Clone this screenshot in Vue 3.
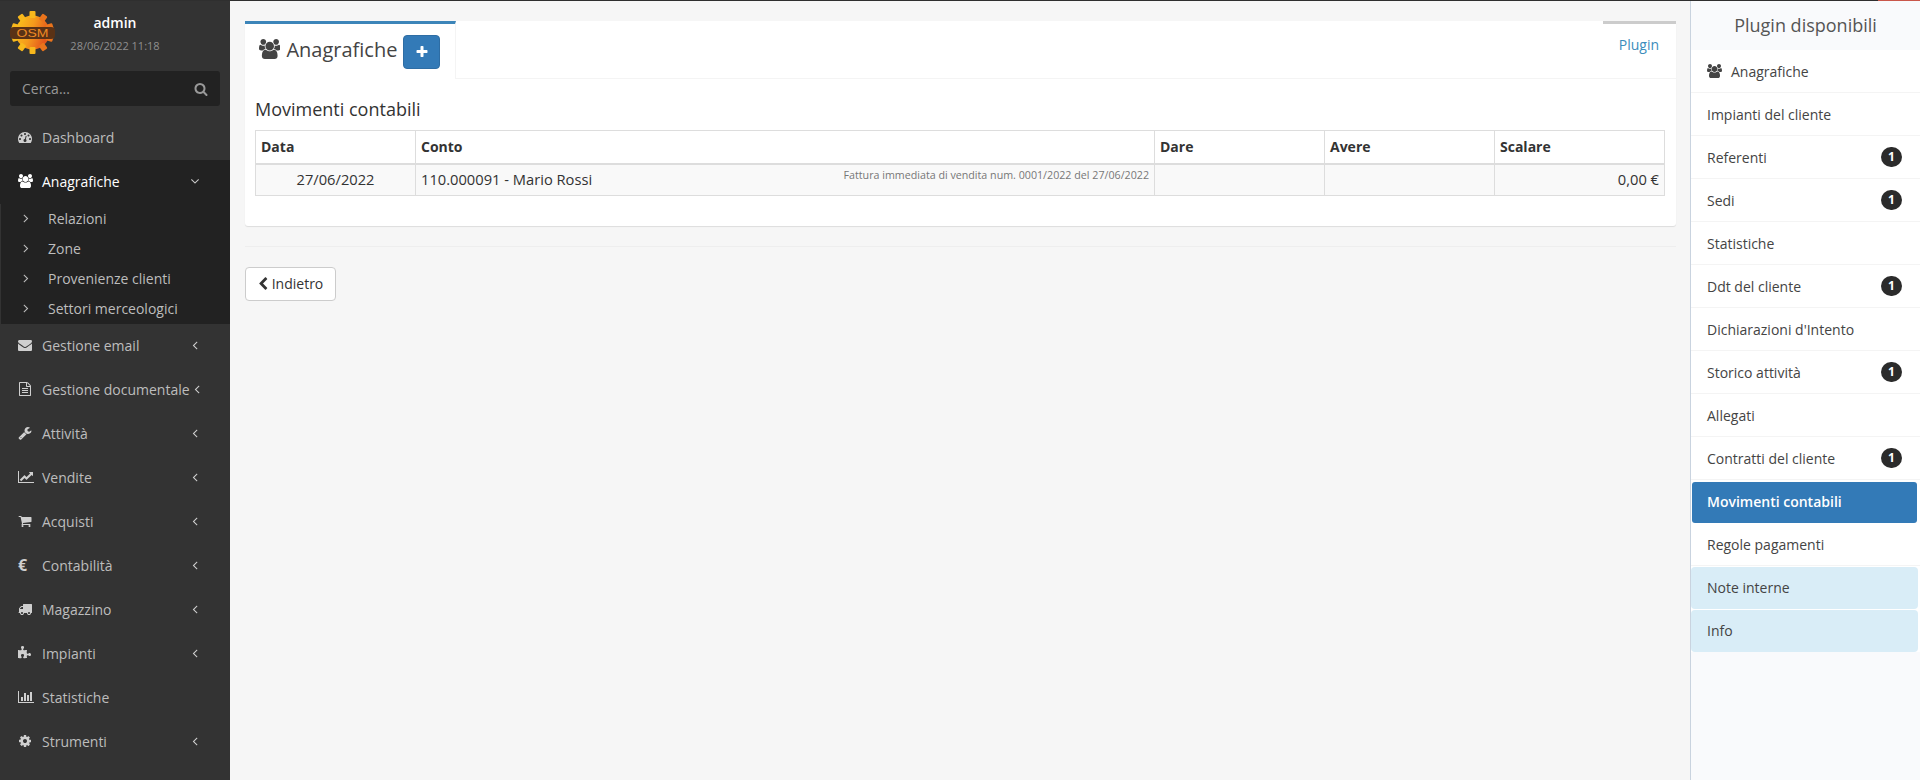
<script setup>
const P = {
  dashboard: 'M384 1152q0-53-37.500-90.500t-90.500-37.500-90.500 37.500-37.500 90.500 37.500 90.500 90.500 37.500 90.500-37.500 37.500-90.500zm192-448q0-53-37.500-90.500t-90.500-37.500-90.500 37.500-37.500 90.500 37.500 90.500 90.500 37.500 90.500-37.500 37.500-90.500zm428 481l101-382q6-26-7.500-48.500t-38.500-29.500-48 6.500-30 39.500l-101 382q-60 5-107 43.500t-63 98.500q-20 77 20 146t117 89 146-20 89-117q16-60-6-117t-72-91zm660-33q0-53-37.500-90.500t-90.500-37.500-90.500 37.500-37.500 90.500 37.500 90.500 90.500 37.500 90.500-37.500 37.500-90.500zm-640-640q0-53-37.500-90.500t-90.500-37.500-90.500 37.500-37.500 90.500 37.500 90.500 90.500 37.500 90.500-37.500 37.500-90.500zm448 192q0-53-37.500-90.500t-90.500-37.500-90.500 37.500-37.500 90.500 37.500 90.500 90.500 37.500 90.500-37.500 37.500-90.500zm320 448q0 261-141 483-19 29-54 29h-1402q-35 0-54-29-141-221-141-483 0-182 71-348t191-286 286-191 348-71 348 71 286 191 191 286 71 348z',
  users: 'M593 896q-162 5-265 128h-134q-82 0-138-40.500t-56-118.500q0-353 124-353 6 0 43.500 21t97.500 42.500 119 21.500q67 0 133-23-5 37-5 66 0 139 81 256zm1071 637q0 120-73 189.500t-194 69.500h-874q-121 0-194-69.500t-73-189.500q0-53 3.500-103.500t14-109 26.500-108.500 43-97.500 62-81 85.500-53.500 111.500-20q10 0 43 21.500t73 48 107 48 135 21.500 135-21.500 107-48 73-48 43-21.500q61 0 111.500 20t85.500 53.500 62 81 43 97.500 26.500 108.500 14 109 3.500 103.500zm-1024-1277q0 106-75 181t-181 75-181-75-75-181 75-181 181-75 181 75 75 181zm704 384q0 159-112.500 271.500t-271.500 112.500-271.500-112.500-112.500-271.500 112.500-271.500 271.500-112.500 271.500 112.500 112.500 271.500zm576 225q0 78-56 118.500t-138 40.500h-134q-103-123-265-128 81-117 81-256 0-29-5-66 66 23 133 23 59 0 119-21.500t97.500-42.500 43.500-21q124 0 124 353zm-128-609q0 106-75 181t-181 75-181-75-75-181 75-181 181-75 181 75 75 181z',
  envelope: 'M1792 710v794q0 66-47 113t-113 47h-1472q-66 0-113-47t-47-113v-794q44 49 101 87 362 246 497 345 57 42 92.500 65.500t94.500 48 110 24.500h2q51 0 110-24.500t94.500-48 92.500-65.500q170-123 498-345 57-39 100-87zm0-294q0 79-49 151t-122 123q-376 261-468 325-10 7-42.500 30.500t-54 38-52 32.500-57.500 27-50 9h-2q-23 0-50-9t-57.500-27-52-32.500-54-38-42.500-30.500q-91-64-262-182.500t-205-142.500q-62-42-117-115.500t-55-136.500q0-78 41.500-130t118.500-52h1472q65 0 112.500 47t47.500 113z',
  file: 'M1596 380q28 28 48 76t20 88v1152q0 40-28 68t-68 28h-1344q-40 0-68-28t-28-68v-1600q0-40 28-68t68-28h896q40 0 88 20t76 48zm-444-244v376h376q-10-29-22-41l-313-313q-12-12-41-22zm384 1528v-1024h-416q-40 0-68-28t-28-68v-416h-768v1536h1280zm-1024-864q0-14 9-23t23-9h704q14 0 23 9t9 23v64q0 14-9 23t-23 9h-704q-14 0-23-9t-9-23v-64zm736 224q14 0 23 9t9 23v64q0 14-9 23t-23 9h-704q-14 0-23-9t-9-23v-64q0-14 9-23t23-9h704zm0 256q14 0 23 9t9 23v64q0 14-9 23t-23 9h-704q-14 0-23-9t-9-23v-64q0-14 9-23t23-9h704z',
  wrench: 'M448 1472q0-26-19-45t-45-19-45 19-19 45 19 45 45 19 45-19 19-45zm644-420l-682 682q-37 37-90 37-52 0-91-37l-106-108q-38-36-38-90 0-53 38-91l681-681q39 98 114.500 173.500t173.500 114.500zm634-435q0 39-23 106-47 134-164.500 217.500t-258.500 83.500q-185 0-316.500-131.500t-131.500-316.500 131.500-316.500 316.500-131.500q58 0 121.500 16.500t107.500 46.500q16 11 16 28t-16 28l-293 169v224l193 107q5-3 79-48.500t135.500-81 70.500-35.500q15 0 23.500 10t8.500 25z',
  line: 'M2048 1536v128h-2048v-1536h128v1408h1920zm-128-1248v435q0 21-19.500 29.500t-35.500-7.500l-121-121-633 633q-10 10-23 10t-23-10l-233-233-416 416-192-192 585-585q10-10 23-10t23 10l233 233 464-464-121-121q-16-16-7.500-35.500t29.500-19.500h435q14 0 23 9t9 23z',
  cart: 'M704 1536q0 52-38 90t-90 38-90-38-38-90 38-90 90-38 90 38 38 90zm896 0q0 52-38 90t-90 38-90-38-38-90 38-90 90-38 90 38 38 90zm128-1088v512q0 24-16.500 42.500t-40.500 21.500l-1044 122q13 60 13 70 0 16-24 64h920q26 0 45 19t19 45-19 45-45 19h-1024q-26 0-45-19t-19-45q0-11 8-31.500t16-36 21.500-40 15.500-29.500l-177-823h-204q-26 0-45-19t-19-45 19-45 45-19h256q16 0 28.500 6.500t19.500 15.500 13 24.500 8 26 5.500 29.500 4.500 26h1201q26 0 45 19t19 45z',
  truck: 'M640 1408q0-52-38-90t-90-38-90 38-38 90 38 90 90 38 90-38 38-90zm-384-512h384v-256h-158q-13 0-22 9l-195 195q-9 9-9 22v30zm1280 512q0-52-38-90t-90-38-90 38-38 90 38 90 90 38 90-38 38-90zm256-1088v1024q0 15-4 26.500t-13.500 18.500-16.500 11.500-23.500 6-22.500 2-25.500 0-22.500-.5q0 106-75 181t-181 75-181-75-75-181h-384q0 106-75 181t-181 75-181-75-75-181h-64q-3 0-22.500.5t-25.500 0-22.500-2-23.500-6-16.500-11.500-13.500-18.500-4-26.500q0-26 19-45t45-19v-320q0-8-.5-35t0-38 2.500-34.500 6.500-37 14-30.500 22.500-30l198-198q19-19 50.500-32t58.500-13h160v-192q0-26 19-45t45-19h1024q26 0 45 19t19 45z',
  puzzle: 'M1664 1098q0 81-44.500 135t-123.500 54q-41 0-77.500-17.500t-59-38-56.500-38-71-17.500q-110 0-110 124 0 39 16 115t15 115v5q-22 0-33 1-34 3-97.500 11.500t-115.500 13.500-98 5q-61 0-103-26.500t-42-83.500q0-37 17.500-71t38-56.500 38-59 17.500-77.500q0-79-54-123.500t-135-44.500q-84 0-143 45.500t-59 127.500q0 43 15 83t33.500 64.500 33.500 53 15 50.500q0 45-46 89-37 35-117 35-95 0-245-24-9-2-27.500-4t-27.500-4l-13-2q-1 0-3-1-2 0-2-1v-1024q2 1 17.500 3.500t34 5 21.500 3.500q150 24 245 24 80 0 117-35 46-44 46-89 0-22-15-50.500t-33.500-53-33.500-64.500-15-83q0-82 59-127.500t144-45.500q80 0 134 44.500t54 123.500q0 41-17.500 77.500t-38 59-38 56.500-17.500 71q0 57 42 83.500t103 26.500q64 0 180-15t163-17v2q-1 2-3.500 17.500t-5 34-3.500 21.500q-24 150-24 245 0 80 35 117 44 46 89 46 22 0 50.500-15t53-33.500 64.500-33.500 83-15q82 0 127.500 59t45.500 143z',
  bars: 'M640 896v512h-256v-512h256zm384-512v1024h-256v-1024h256zm1024 1152v128h-2048v-1536h128v1408h1920zm-640-896v768h-256v-768h256zm384-384v1152h-256v-1152h256z',
  cog: 'M1152 896q0-106-75-181t-181-75-181 75-75 181 75 181 181 75 181-75 75-181zm512-109v222q0 12-8 23t-20 13l-185 28q-19 54-39 91 35 50 107 138 10 12 10 25t-9 23q-27 37-99 108t-94 71q-12 0-26-9l-138-108q-44 23-91 38-16 136-29 186-7 28-36 28h-222q-14 0-24.500-8.500t-11.500-21.500l-28-184q-49-16-90-37l-141 107q-10 9-25 9-14 0-25-11-126-114-165-168-7-10-7-23 0-12 8-23 15-21 51-66.500t54-70.500q-27-50-41-99l-183-27q-13-2-21-12.500t-8-23.500v-222q0-12 8-23t19-13l186-28q14-46 39-92-40-57-107-138-10-12-10-24 0-10 9-23 26-36 98.500-107.500t94.500-71.500q13 0 26 10l138 107q44-23 91-38 16-136 29-186 7-28 36-28h222q14 0 24.500 8.500t11.500 21.500l28 184q49 16 90 37l142-107q9-9 24-9 13 0 25 10 129 119 165 170 7 8 7 22 0 12-8 23-15 21-51 66.500t-54 70.500q26 50 41 98l183 28q13 2 21 12.500t8 23.500z',
  search: 'M1216 832q0-185-131.500-316.500t-316.500-131.500-316.500 131.500-131.500 316.500 131.500 316.500 316.500 131.500 316.500-131.500 131.500-316.500zm512 832q0 52-38 90t-90 38q-54 0-90-38l-343-342q-179 124-399 124-143 0-273.500-55.500t-225-150-150-225-55.500-273.500 55.500-273.500 150-225 225-150 273.500-55.500 273.500 55.500 225 150 150 225 55.500 273.500q0 220-124 399l343 343q37 37 37 90z',
  plus: 'M1600 736v192q0 40-28 68t-68 28h-416v416q0 40-28 68t-68 28h-192q-40 0-68-28t-28-68v-416h-416q-40 0-68-28t-28-68v-192q0-40 28-68t68-28h416v-416q0-40 28-68t68-28h192q40 0 68 28t28 68v416h416q40 0 68 28t28 68z',
  chevronLeft: 'M1427 301l-531 531 531 531q19 19 19 45t-19 45l-166 166q-19 19-45 19t-45-19l-742-742q-19-19-19-45t19-45l742-742q19-19 45-19t45 19l166 166q19 19 19 45t-19 45z',
  angleLeft: 'M1203 544q0 13-10 23l-393 393 393 393q10 10 10 23t-10 23l-50 50q-10 10-23 10t-23-10l-466-466q-10-10-10-23t10-23l466-466q10-10 23-10t23 10l50 50q10 10 10 23z',
  angleDown: 'M1395 736q0 13-10 23l-466 466q-10 10-23 10t-23-10l-466-466q-10-10-10-23t10-23l50-50q10-10 23-10t23 10l393 393 393-393q10-10 23-10t23 10l50 50q10 10 10 23z',
  angleRight: 'M1171 960q0 13-10 23l-466 466q-10 10-23 10t-23-10l-50-50q-10-10-10-23t10-23l393-393-393-393q-10-10-10-23t10-23l50-50q10-10 23-10t23 10l466 466q10 10 10 23z'
}
const W = { users: 1920, line: 2048, bars: 2048 }
const iw = (k) => (W[k] || 1792)

const subItems = ['Relazioni', 'Zone', 'Provenienze clienti', 'Settori merceologici']
const lowerMenu = [
  { label: 'Gestione email', icon: 'envelope', more: true },
  { label: 'Gestione documentale', icon: 'file', more: true },
  { label: 'Attività', icon: 'wrench', more: true },
  { label: 'Vendite', icon: 'line', more: true },
  { label: 'Acquisti', icon: 'cart', more: true },
  { label: 'Contabilità', glyph: '€', more: true },
  { label: 'Magazzino', icon: 'truck', more: true },
  { label: 'Impianti', icon: 'puzzle', more: true },
  { label: 'Statistiche', icon: 'bars', more: false },
  { label: 'Strumenti', icon: 'cog', more: true }
]
const plugins = [
  { label: 'Impianti del cliente' },
  { label: 'Referenti', badge: 1 },
  { label: 'Sedi', badge: 1 },
  { label: 'Statistiche' },
  { label: 'Ddt del cliente', badge: 1 },
  { label: "Dichiarazioni d'Intento" },
  { label: 'Storico attività', badge: 1 },
  { label: 'Allegati' },
  { label: 'Contratti del cliente', badge: 1 },
  { label: 'Movimenti contabili', kind: 'active' },
  { label: 'Regole pagamenti' },
  { label: 'Note interne', kind: 'info' },
  { label: 'Info', kind: 'info' }
]
const teeth = [0, 36, 72, 108, 144, 180, 216, 252, 288, 324]
</script>

<template>
  <div class="page">
    <div class="topline"><div class="topline-red"></div></div>
    <div class="layout">
      <aside class="sidebar">
        <div class="user">
          <svg class="logo" viewBox="0 0 46 46" width="46" height="46">
            <defs>
              <linearGradient id="gearGrad" x1="0" y1="0" x2="1" y2="0.35">
                <stop offset="0" stop-color="#fbc81c" />
                <stop offset="0.55" stop-color="#f59a1c" />
                <stop offset="1" stop-color="#e4561c" />
              </linearGradient>
            </defs>
            <circle cx="22.500" cy="22.500" r="17" fill="url(#gearGrad)" />
            <rect v-for="t in teeth" :key="t" x="19.500" y="1" width="6" height="7" rx="1" :fill="t > 0 && t < 180 ? '#ea741c' : '#f8b81c'" :transform="`rotate(${t} 22.500 22.500)`" />
            <rect x="0" y="17" width="45" height="12" rx="4" fill="#5a3216" />
            <text x="22.500" y="26.800" text-anchor="middle" textLength="32" lengthAdjust="spacingAndGlyphs" class="logo-text">OSM</text>
          </svg>
          <div class="user-info">
            <div class="user-name">admin</div>
            <div class="user-date">28/06/2022 11:18</div>
          </div>
        </div>

        <div class="search">
          <span>Cerca...</span>
          <svg viewBox="0 0 1792 1792" width="14" height="14"><path :d="P.search" /></svg>
        </div>

        <nav class="menu">
          <div class="item">
            <span class="icon"><svg :viewBox="`0 0 ${iw('dashboard')} 1792`" height="14"><path :d="P.dashboard" /></svg></span>
            <span>Dashboard</span>
          </div>
          <div class="item item-open">
            <span class="icon"><svg :viewBox="`0 0 ${iw('users')} 1792`" height="14"><path :d="P.users" /></svg></span>
            <span>Anagrafiche</span>
            <svg class="arrow" viewBox="0 0 1792 1792" width="14" height="14"><path :d="P.angleDown" /></svg>
          </div>
          <div class="submenu">
            <div v-for="s in subItems" :key="s" class="subitem">
              <svg viewBox="0 0 1792 1792" width="14" height="14"><path :d="P.angleRight" /></svg>
              <span>{{ s }}</span>
            </div>
          </div>
          <div v-for="m in lowerMenu" :key="m.label" class="item">
            <span class="icon">
              <svg v-if="m.icon" :viewBox="`0 0 ${iw(m.icon)} 1792`" height="14"><path :d="P[m.icon]" /></svg>
              <b v-else class="glyph">{{ m.glyph }}</b>
            </span>
            <span class="label">{{ m.label }}</span>
            <svg v-if="m.more" class="arrow" viewBox="0 0 1792 1792" width="14" height="14"><path :d="P.angleLeft" /></svg>
          </div>
        </nav>
      </aside>

      <main class="main">
        <section class="card">
          <header class="tabs">
            <div class="tab-active">
              <svg viewBox="0 0 1920 1792" height="20" class="tab-icon"><path :d="P.users" /></svg>
              <span class="tab-title">Anagrafiche</span>
              <button class="add" type="button">
                <svg viewBox="0 0 1792 1792" width="14" height="14"><path :d="P.plus" /></svg>
              </button>
            </div>
            <a class="tab-plugin">Plugin</a>
          </header>
          <div class="card-body">
            <h4 class="section-title">Movimenti contabili</h4>
            <table class="ledger">
              <colgroup>
                <col class="c-date" /><col class="c-account" /><col class="c-num" /><col class="c-num" /><col class="c-num" />
              </colgroup>
              <thead>
                <tr><th>Data</th><th>Conto</th><th>Dare</th><th>Avere</th><th>Scalare</th></tr>
              </thead>
              <tbody>
                <tr>
                  <td class="center">27/06/2022</td>
                  <td>
                    <div class="account">
                      <span>110.000091 - Mario Rossi</span>
                      <small>Fattura immediata di vendita num. 0001/2022 del 27/06/2022</small>
                    </div>
                  </td>
                  <td></td>
                  <td></td>
                  <td class="right">0,00 €</td>
                </tr>
              </tbody>
            </table>
          </div>
        </section>
        <hr class="rule" />
        <button class="back" type="button">
          <svg viewBox="0 0 1792 1792" width="14" height="14"><path :d="P.chevronLeft" /></svg>
          <span>Indietro</span>
        </button>
      </main>

      <aside class="plugins">
        <div class="plugins-head">Plugin disponibili</div>
        <ul class="plugin-list">
          <li class="plugin">
            <div class="plugin-link">
              <span class="plugin-main">
                <svg viewBox="0 0 1920 1792" height="14"><path :d="P.users" /></svg>
                <span>Anagrafiche</span>
              </span>
            </div>
          </li>
          <li v-for="p in plugins" :key="p.label" class="plugin" :class="p.kind">
            <div class="plugin-link">
              <span>{{ p.label }}</span>
              <span v-if="p.badge" class="badge">{{ p.badge }}</span>
            </div>
          </li>
        </ul>
      </aside>
    </div>
  </div>
</template>

<style>
html, body { margin: 0; height: 100%; overflow: hidden; background: #f6f6f6; }
</style>

<style scoped>
.page {
  width: 1920px;
  height: 780px;
  display: flex;
  flex-direction: column;
  font-family: "Open Sans", "Liberation Sans", sans-serif;
  font-size: 14px;
  color: #333;
  overflow: hidden;
}
.topline { height: 1px; flex: none; background: #2f2f2f; display: flex; justify-content: flex-end; }
.topline-red { width: 42px; background: #c9574a; }
.layout { flex: 1; display: flex; min-height: 0; }

/* sidebar */
.sidebar { width: 230px; flex: none; background: #333; color: #bdbdbd; }
.user { height: 70px; display: flex; padding: 9px 0 0 10px; box-sizing: border-box; }
.logo { flex: none; }
.logo-text { font-family: "Liberation Sans", sans-serif; font-size: 11px; fill: #ee8a24; }
.user-info { width: 90px; margin-left: 14px; text-align: center; }
.user-name { color: #fff; font-weight: 600; font-size: 14px; line-height: 20px; margin-top: 3px; }
.user-date { color: #8f8f8f; font-size: 11px; line-height: 15px; margin-top: 5px; white-space: nowrap; }

.search {
  margin: 0 10px;
  height: 35px;
  background: #222;
  border-radius: 3px;
  display: flex;
  align-items: center;
  justify-content: space-between;
  padding: 0 12px;
  color: #999;
}
.search svg { fill: #999; }
.menu { margin-top: 10px; }
.item {
  height: 44px;
  display: flex;
  align-items: center;
  padding: 0 28px 2px 18px;
  box-sizing: border-box;
  white-space: nowrap;
}
.item svg { fill: #cfcfcf; display: block; }
.item-open { background: #222; color: #fff; }
.item-open svg { fill: #fff; }
.icon { width: 24px; flex: none; display: flex; align-items: center; }
.glyph { font-size: 16px; color: #cfcfcf; line-height: 14px; }
.arrow { margin-left: auto; flex: none; }
.item-open .arrow { fill: #ccc; }
.submenu { background: #222; margin: -1px 0 0 1px; padding-bottom: 1px; position: relative; }
.subitem { height: 30px; display: flex; align-items: center; padding-left: 18px; color: #bdbdbd; }
.subitem svg { fill: #bdbdbd; flex: none; margin-right: 15px; }

/* main */
.main { flex: 1; min-width: 0; padding: 20px 14px 0 15px; box-sizing: border-box; }
.card { background: #fff; border-radius: 3px; box-shadow: 0 1px 1px rgba(0, 0, 0, .1); }
.tabs { display: flex; justify-content: space-between; height: 58px; border-bottom: 1px solid #f4f4f4; box-sizing: border-box; }
.tab-active {
  width: 211px;
  height: 58px;
  box-sizing: border-box;
  border-top: 3px solid #3c85b9;
  border-right: 1px solid #f4f4f4;
  background: #fff;
  display: flex;
  align-items: flex-start;
  padding: 11px 0 0 14px;
}
.tab-icon { fill: #444; margin-top: 4px; margin-right: 6px; flex: none; }
.tab-title { font-size: 20px; line-height: 30px; color: #444; }
.add {
  width: 37px;
  height: 34px;
  margin: 0 0 0 6px;
  padding: 0;
  border: 1px solid #2e6da4;
  border-radius: 4px;
  background: #337ab7;
  display: flex;
  align-items: center;
  justify-content: center;
}
.add svg { fill: #fff; }
.tab-plugin {
  width: 73px;
  height: 32px;
  box-sizing: border-box;
  border-top: 3px solid #ccc;
  color: #3c8dbc;
  text-align: right;
  padding: 11px 17px 0 0;
  line-height: 20px;
}
.card-body { padding: 10px 10px 30px; }
.section-title { margin: 0 0 11px; font-size: 18px; font-weight: 400; line-height: 20px; color: #333; padding-top: 10px; }
.ledger { width: 1409px; border-collapse: collapse; table-layout: fixed; }
.c-date { width: 160px; }
.c-account { width: 739px; }
.c-num { width: 170px; }
.ledger th, .ledger td { border: 1px solid #ddd; padding: 4px 5px; line-height: 20px; text-align: left; color: #333; }
.ledger th { font-weight: 700; border-bottom-width: 2px; height: 24px; }
.ledger td { padding: 4px 5px 6px; background: #f9f9f9; font-size: 14.7px; }
.ledger td.center { text-align: center; }
.ledger td.right { text-align: right; }
.account { display: flex; justify-content: space-between; align-items: flex-start; }
.account small { font-size: 10.7px; line-height: 14px; color: #777; margin-top: -1px; }

.rule { margin: 20px 0; border: 0; border-top: 1px solid #eee; }
.back {
  width: 91px;
  height: 34px;
  padding: 0 0 1px;
  background: #fff;
  border: 1px solid #ccc;
  border-radius: 4px;
  font: inherit;
  color: #333;
  display: flex;
  align-items: center;
  justify-content: center;
  gap: 2px;
}
.back svg { fill: #333; margin-left: -2px; flex: none; }

/* plugin panel */
.plugins { width: 230px; flex: none; box-sizing: border-box; background: #f9fafc; border-left: 1px solid #c9d3df; }
.plugins-head { height: 49px; font-size: 18px; line-height: 48px; text-align: center; color: #555; }
.plugin-list { list-style: none; margin: 0; padding: 0; background: #fff; }
.plugin { height: 43px; box-sizing: border-box; border-bottom: 1px solid #f4f4f4; color: #444; }
.plugin-link { height: 42px; display: flex; align-items: center; justify-content: space-between; padding: 0 18px 0 16px; box-sizing: border-box; }
.plugin-main { display: flex; align-items: center; gap: 9px; }
.plugin-main svg { fill: #444; }
.badge {
  width: 21px;
  height: 20px;
  border-radius: 10px;
  background: #2b2b2b;
  color: #fff;
  font-size: 12px;
  font-weight: 700;
  line-height: 20px;
  text-align: center;
  margin-bottom: 1px;
}
.plugin.active { border-bottom: 0; padding: 2px 3px 0 1px; }
.plugin.active .plugin-link { background: #337ab7; color: #fff; font-weight: 600; border-radius: 3px; height: 41px; padding: 0 18px 2px 15px; }
.plugin.info { border-bottom: 0; padding-top: 1px; }
.plugin.info .plugin-link { background: #d9edf7; border-radius: 4px; margin-right: 2px; padding-bottom: 2px; }
</style>
